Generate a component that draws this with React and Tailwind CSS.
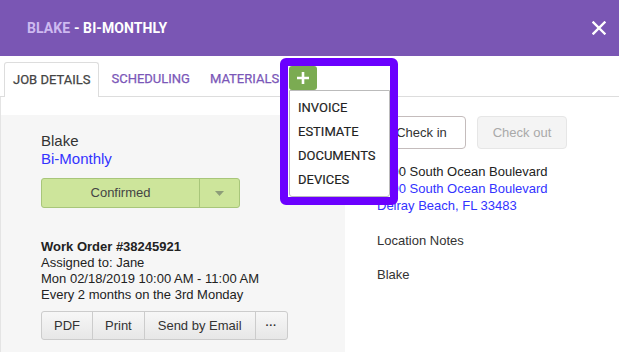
import React from "react";

export default function App() {
  return (
    <div className="relative w-[619px] h-[352px] overflow-hidden bg-white font-['Liberation_Sans',Arial,sans-serif] text-[#333]">
      {/* Header */}
      <div className="h-[56px] bg-[#7a56b4] flex items-center justify-between pl-[27px] pr-[13px] font-['Roboto',sans-serif]">
        <div className="text-[14px] font-bold leading-none tracking-[0.1px]">
          <span className="text-[#cdb9f0]">BLAKE</span>
          <span className="text-white"> - BI-MONTHLY</span>
        </div>
        <svg width="14" height="14" viewBox="0 0 14 14">
          <path d="M1.5 1.5 L12.5 12.5 M12.5 1.5 L1.5 12.5" stroke="white" strokeWidth="2.4" strokeLinecap="square" />
        </svg>
      </div>

      {/* Tabs */}
      <div className="h-[41px] flex items-end border-b border-[#dddddd] pl-[4px] font-['Roboto',sans-serif] text-[13px] font-normal [-webkit-text-stroke:0.25px]">
        <div className="h-[35px] -mb-px flex items-center px-[8px] border border-b-0 border-[#dddddd] rounded-t-[3px] bg-white text-[#444]">
          JOB DETAILS
        </div>
        <div className="h-[35px] flex items-center ml-[2px] px-[10px] text-[#7b57b8]">SCHEDULING</div>
        <div className="h-[35px] flex items-center px-[10px] text-[#7b57b8]">MATERIALS</div>
      </div>

      {/* Body */}
      <div className="flex h-[255px] pt-[18px] border-l border-[#e4e4e4]">
        <div className="w-[344px] shrink-0 bg-[#f6f6f6] pl-[40px] pt-[17px]">
          <div className="text-[15px] leading-[18px] text-[#333]">Blake</div>
          <div className="text-[15px] leading-[18px] text-[#3333ff]">Bi-Monthly</div>
          <div className="mt-[10px] w-[199px] h-[30px] flex rounded-[3px] border border-[#a8c67a] bg-[#cde59b]">
            <div className="w-[158px] flex items-center justify-center text-[13px] text-[#444] border-r border-[#a8c67a]">
              Confirmed
            </div>
            <div className="flex-1 flex items-center justify-center">
              <svg width="9" height="5" viewBox="0 0 9 5">
                <path d="M0 0 L9 0 L4.5 5 Z" fill="#8d9d78" />
              </svg>
            </div>
          </div>
          <div className="mt-[31px] text-[13px] leading-[16px] text-[#222]">
            <div className="font-bold">Work Order #38245921</div>
            <div>Assigned to: Jane</div>
            <div>Mon 02/18/2019 10:00 AM - 11:00 AM</div>
            <div>Every 2 months on the 3rd Monday</div>
          </div>
          <div className="mt-[8px] inline-flex h-[29px] rounded-[3px] border border-[#cccccc] bg-gradient-to-b from-[#f7f7f7] to-[#e7e7e7] text-[13px] text-[#333]">
            <div className="flex items-center px-[12px] border-r border-[#cccccc]">PDF</div>
            <div className="flex items-center px-[12px] border-r border-[#cccccc]">Print</div>
            <div className="flex items-center px-[13px] border-r border-[#cccccc]">Send by Email</div>
            <div className="flex items-center px-[10px] text-[11px] font-bold">···</div>
          </div>
        </div>

        <div className="flex-1 pl-[32px] pt-[1px]">
          <div className="flex gap-[11px]">
            <div className="w-[89px] h-[33px] flex items-center justify-center rounded-[4px] border border-[#c4bcbc] bg-white text-[13px] text-[#333]">
              Check in
            </div>
            <div className="w-[90px] h-[33px] flex items-center justify-center rounded-[4px] border border-[#e6e6e6] bg-[#f4f4f4] text-[13px] text-[#a9a9a9]">
              Check out
            </div>
          </div>
          <div className="mt-[14px] text-[13px] leading-[17px]">
            <div className="text-[#222]">1000 South Ocean Boulevard</div>
            <div className="text-[#3333ff]">1000 South Ocean Boulevard</div>
            <div className="text-[#3333ff]">Delray Beach, FL 33483</div>
          </div>
          <div className="mt-[18px] text-[13px] leading-[17px] text-[#333]">Location Notes</div>
          <div className="mt-[17px] text-[13px] leading-[17px] text-[#333]">Blake</div>
        </div>
      </div>

      {/* Popup overlay */}
      <div className="absolute left-[280px] top-[58px] w-[118px] h-[147px] border-[8px] border-[#6b00ff] rounded-[6px] bg-white flex flex-col font-['Roboto',sans-serif]">
        <div className="h-[24px] w-[28px] ml-[1px] rounded-[3px] bg-[#7bab52] flex items-center justify-center">
          <svg width="12" height="12" viewBox="0 0 12 12">
            <path d="M6 0 V12 M0 6 H12" stroke="white" strokeWidth="2.6" />
          </svg>
        </div>
        <div className="flex-1 ml-[1px] border border-[#bbbbbb] rounded-b-[3px] bg-white pt-[5px] text-[13px] font-normal [-webkit-text-stroke:0.15px] text-[#222]">
          <div className="h-[24px] flex items-center pl-[8px]">INVOICE</div>
          <div className="h-[24px] flex items-center pl-[8px]">ESTIMATE</div>
          <div className="h-[24px] flex items-center pl-[8px]">DOCUMENTS</div>
          <div className="h-[24px] flex items-center pl-[8px]">DEVICES</div>
        </div>
      </div>
    </div>
  );
}
